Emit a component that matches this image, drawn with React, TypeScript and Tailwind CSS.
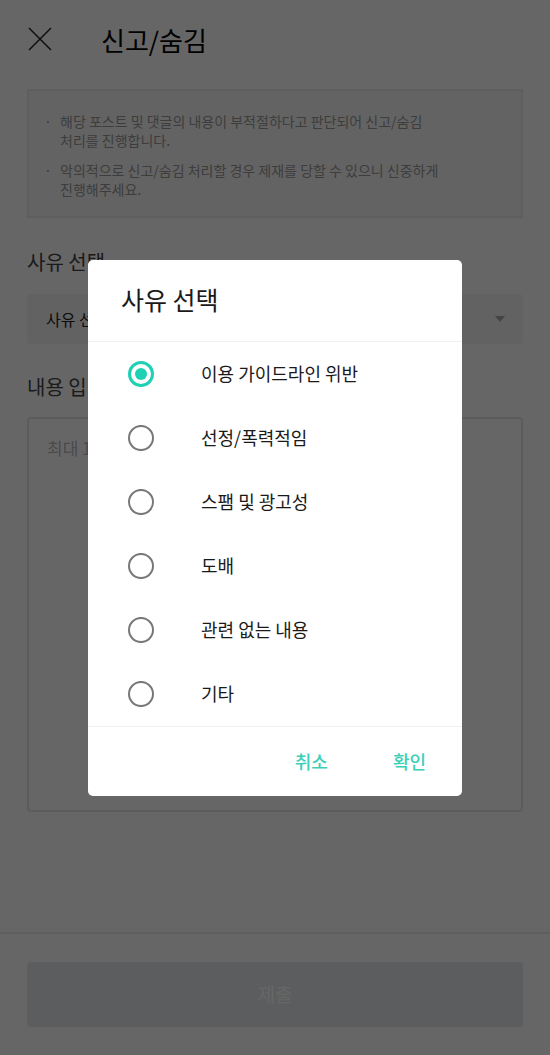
import { useState } from 'react';

const FONT = { fontFamily: '"Noto Sans CJK KR", "Noto Sans", sans-serif' };

const REASONS = [
  '이용 가이드라인 위반',
  '선정/폭력적임',
  '스팸 및 광고성',
  '도배',
  '관련 없는 내용',
  '기타',
];

function Radio({ checked }: { checked: boolean }) {
  if (checked) {
    return (
      <span className="flex h-[26px] w-[26px] items-center justify-center rounded-full border-[3px] border-[#1fd1b3]">
        <span className="h-[12px] w-[12px] rounded-full bg-[#1fd1b3]" />
      </span>
    );
  }
  return <span className="block h-[26px] w-[26px] rounded-full border-[2.5px] border-[#777]" />;
}

function ReasonDialog() {
  const [selected, setSelected] = useState(0);
  return (
    <div className="fixed inset-0 flex items-center justify-center bg-black/60">
      <div className="w-[374px] rounded-[5px] bg-white">
        <div className="flex h-[82px] items-center border-b border-[#f0f0f0] pl-[33px]">
          <h2 className="text-[25px] text-[#1a1a1a]">사유 선택</h2>
        </div>
        <ul className="border-b border-[#f0f0f0]">
          {REASONS.map((reason, index) => (
            <li
              key={reason}
              onClick={() => setSelected(index)}
              className="flex h-[64px] cursor-pointer items-center pl-[40px]"
            >
              <Radio checked={selected === index} />
              <span className="ml-[47px] text-[18px] text-[#1a1a1a]">{reason}</span>
            </li>
          ))}
        </ul>
        <div className="flex h-[69px] items-center justify-end gap-[65px] pr-[36px]">
          <button className="text-[18px] font-medium text-[#3ccfb8]">취소</button>
          <button className="text-[18px] font-medium text-[#3ccfb8]">확인</button>
        </div>
      </div>
    </div>
  );
}

export default function App() {
  return (
    <div className="relative flex h-[1055px] flex-col bg-white" style={FONT}>
      <header className="flex h-[78px] items-center px-[28px]">
        <svg width="24" height="24" viewBox="0 0 24 24" fill="none" stroke="#222" strokeWidth="1.5">
          <path d="M1 1L23 23M23 1L1 23" />
        </svg>
        <h1 className="ml-[49px] text-[26px] text-black">신고/숨김</h1>
      </header>

      <div className="mx-[27px] mt-[11px] flex h-[129px] flex-col justify-center gap-[11px] border-2 border-[#ebebeb] bg-[#f8f8f8] pl-[15px] pt-[3px] text-[14px] leading-[19px] text-[#999]">
        <div className="flex">
          <span className="w-[16px]">·</span>
          <p>
            해당 포스트 및 댓글의 내용이 부적절하다고 판단되어 신고/숨김
            <br />
            처리를 진행합니다.
          </p>
        </div>
        <div className="flex">
          <span className="w-[16px]">·</span>
          <p>
            악의적으로 신고/숨김 처리할 경우 제재를 당할 수 있으니 신중하게
            <br />
            진행해주세요.
          </p>
        </div>
      </div>

      <div className="mx-[27px] mt-[30px]">
        <p className="text-[20px] leading-[28px] text-[#444]">사유 선택</p>
        <div className="mt-[18px] flex h-[50px] items-center justify-between rounded-[4px] bg-[#f6f6f6] pl-[19px] pr-[18px]">
          <span className="text-[16px] text-[#222]">사유 선택</span>
          <span className="h-0 w-0 border-x-[5px] border-t-[6px] border-x-transparent border-t-[#aaa]" />
        </div>
        <p className="mt-[29px] text-[20px] leading-[28px] text-[#444]">내용 입력</p>
        <div className="mt-[16px] h-[395px] rounded-[4px] border-2 border-[#e4e4e4] px-[18px] pt-[16px]">
          <span className="text-[17px] text-[#bbb]">최대 1000자</span>
        </div>
      </div>

      <div className="mt-auto border-t-2 border-[#eee] px-[27px] pb-[28px] pt-[28px]">
        <button className="flex h-[65px] w-full items-center justify-center rounded-[4px] bg-[#e6e8eb] text-[19px] text-white">
          제출
        </button>
      </div>

      <ReasonDialog />
    </div>
  );
}
